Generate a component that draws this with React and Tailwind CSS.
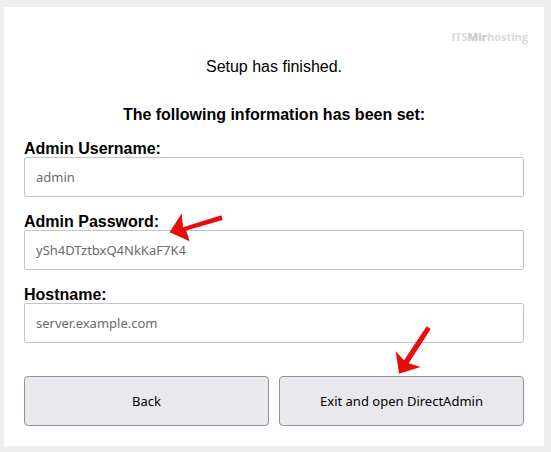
import React from 'react';

const fields = [
  { id: 'username', label: 'Admin Username:', value: 'admin' },
  { id: 'password', label: 'Admin Password:', value: 'ySh4DTztbxQ4NkKaF7K4', arrow: true },
  { id: 'hostname', label: 'Hostname:', value: 'server.example.com' },
];

const Field = ({ id, label, value, arrow }) => (
  <div className="relative flex flex-col">
    <label htmlFor={id} className="self-start text-base leading-4 font-bold">
      {label}
    </label>
    <input
      id={id}
      type="text"
      readOnly
      defaultValue={value}
      className="h-10 w-full rounded-xs border border-[#c3c3c9] bg-white px-[11px] font-['Noto_Sans',sans-serif] text-[13px] text-[#6b6b6b] outline-none"
    />
    {arrow && (
      <svg aria-hidden="true" className="pointer-events-none absolute top-0 left-36 h-8 w-14 overflow-visible" viewBox="0 0 56 32">
        <path fill="#e90c0c" d="M1.5 18.2 13.7-.4 15 13.2 53.3 1.2 54.7 5.9 18.2 16.4 21.7 27.3Z" />
      </svg>
    )}
  </div>
);

const buttonStyle =
  "h-[50px] w-full rounded-sm border border-[#8f8f9d] bg-[#e9e9ed] pt-0.5 font-['Noto_Sans',sans-serif] text-[13px] text-black";

const App = () => {
  return (
    <div className="min-h-screen bg-[#eeeeee] pt-[7px] pr-[7px] pb-[6px] pl-1 font-['Liberation_Sans',Arial,sans-serif] text-black">
      <main className="bg-white px-5 pt-5 pb-5">
        <div className="-mr-1 flex justify-end font-['Open_Sans',sans-serif] text-[11px] leading-5 font-bold text-[#d9d9d9]">
          <span>ITS</span>
          <span className="font-extrabold text-[#cccccc]">Mir</span>
          <span>hosting</span>
        </div>

        <p className="mt-2 text-center text-base leading-6">Setup has finished.</p>
        <h1 className="mt-6 text-center text-base leading-6 font-bold">
          The following information has been set:
        </h1>

        <form onSubmit={(e) => e.preventDefault()}>
          <div className="mt-[14px] flex flex-col gap-[17px]">
            {fields.map((field) => (
              <Field key={field.id} {...field} />
            ))}
          </div>

          <div className="mt-[33px] grid grid-cols-2 gap-[10px]">
            <button type="button" className={buttonStyle}>
              Back
            </button>
            <div className="relative">
              <button type="submit" className={buttonStyle}>
                Exit and open DirectAdmin
              </button>
              <svg aria-hidden="true" className="pointer-events-none absolute -top-13 left-29 h-13 w-10" viewBox="0 0 40 52">
                <path fill="#e90c0c" d="M4 49.7.7 27.3 9 36.3 31.7 2.3 35.7 5 13.7 39.3 25.7 43Z" />
              </svg>
            </div>
          </div>
        </form>
      </main>
    </div>
  );
};

export default App;
